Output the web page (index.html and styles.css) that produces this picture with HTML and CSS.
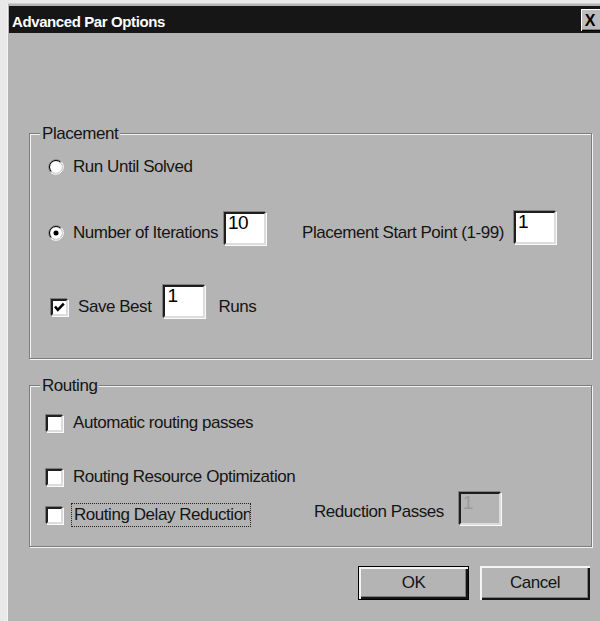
FILE: index.html
```html
<!DOCTYPE html>
<html lang="en">
<head>
<meta charset="utf-8">
<title>Advanced Par Options</title>
<link rel="stylesheet" href="styles.css">
</head>
<body>
<div class="window">
  <div class="titlebar">
    <span class="title">Advanced Par Options</span>
    <span class="close">X</span>
  </div>
  <div class="client">
    <fieldset class="group placement">
      <legend>Placement</legend>
      <div class="row row-solve">
        <span class="choice radio-choice">
          <svg class="radio" width="16" height="16" viewBox="0 0 16 16">
            <circle cx="8" cy="8" r="6" fill="#fff"/>
            <path d="M2.7 13.3A7.5 7.5 0 0 1 13.3 2.7" stroke="#808080" fill="none"/>
            <path d="M13.3 2.7A7.5 7.5 0 0 1 2.7 13.3" stroke="#fff" fill="none"/>
            <path d="M3.4 12.6A6.5 6.5 0 0 1 12.6 3.4" stroke="#000" fill="none"/>
            <path d="M12.6 3.4A6.5 6.5 0 0 1 3.4 12.6" stroke="#d6d6d6" fill="none"/>
          </svg>
          <span class="label">Run Until Solved</span>
        </span>
      </div>
      <div class="row row-iter">
        <span class="choice radio-choice">
          <svg class="radio" width="16" height="16" viewBox="0 0 16 16">
            <circle cx="8" cy="8" r="6" fill="#fff"/>
            <path d="M2.7 13.3A7.5 7.5 0 0 1 13.3 2.7" stroke="#808080" fill="none"/>
            <path d="M13.3 2.7A7.5 7.5 0 0 1 2.7 13.3" stroke="#fff" fill="none"/>
            <path d="M3.4 12.6A6.5 6.5 0 0 1 12.6 3.4" stroke="#000" fill="none"/>
            <path d="M12.6 3.4A6.5 6.5 0 0 1 3.4 12.6" stroke="#d6d6d6" fill="none"/>
            <circle cx="8" cy="8" r="2.5" fill="#000"/>
          </svg>
          <span class="label">Number of Iterations</span>
        </span>
        <span class="field field-iter">10</span>
        <span class="label label-start">Placement Start Point (1-99)</span>
        <span class="field field-start">1</span>
      </div>
      <div class="row row-save">
        <span class="choice check-choice">
          <span class="check">
            <svg width="13" height="13" viewBox="0 0 13 13">
              <polyline points="2,5.5 4.8,8.8 10.8,2.6" fill="none" stroke="#000" stroke-width="2.6"/>
            </svg>
          </span>
          <span class="label">Save Best</span>
        </span>
        <span class="field field-save">1</span>
        <span class="label label-runs">Runs</span>
      </div>
    </fieldset>

    <fieldset class="group routing">
      <legend>Routing</legend>
      <div class="row row-auto">
        <span class="choice route-choice">
          <span class="check"></span>
          <span class="label">Automatic routing passes</span>
        </span>
      </div>
      <div class="row row-resource">
        <span class="choice route-choice">
          <span class="check"></span>
          <span class="label">Routing Resource Optimization</span>
        </span>
      </div>
      <div class="row row-delay">
        <span class="choice route-choice delay-choice">
          <span class="check"></span>
          <span class="label focus">Routing Delay Reduction</span>
        </span>
        <span class="label label-passes">Reduction Passes</span>
        <span class="field field-passes disabled">1</span>
      </div>
    </fieldset>

    <div class="buttons">
      <span class="button default">OK</span>
      <span class="button">Cancel</span>
    </div>
  </div>
</div>
</body>
</html>
```
FILE: styles.css
```css
html, body {
  margin: 0;
  height: 100%;
}

body {
  background: #e9e9e9;
  overflow: hidden;
  padding-top: 3px;
  box-sizing: border-box;
  font: 17px "Liberation Sans", Arial, sans-serif;
  letter-spacing: -0.45px;
  color: #151515;
}

/* dialog frame */
.window {
  margin-left: 7px;
  width: 620px;
  height: 640px;
  background: #b4b4b4;
  border-top: 1px solid #cfcfcf;
  border-left: 1px solid #f4f4f4;
  padding: 2px 0 0 1px;
}

.titlebar {
  width: 600px;
  height: 27px;
  box-sizing: border-box;
  padding-left: 3px;
  background: #161616;
  display: flex;
  align-items: center;
}

.title {
  color: #fff;
  font-weight: bold;
  font-size: 15px;
  letter-spacing: -0.4px;
  line-height: 16px;
  margin-top: 4px;
}

.close {
  margin-left: auto;
  margin-right: 6px;
  width: 22px;
  height: 22px;
  box-sizing: border-box;
  padding-top: 2px;
  padding-right: 4px;
  background: #bcbcbc;
  box-shadow: inset 1px 1px 0 #fff, inset -1px -1px 0 #000, inset -2px -2px 0 #808080;
  display: flex;
  align-items: center;
  justify-content: center;
  font-weight: bold;
  font-size: 16px;
  letter-spacing: 0;
  color: #000;
}

.client {
  padding: 91px 0 0 20px;
}

/* etched group boxes */
.group {
  margin: 0;
  width: 563px;
  box-sizing: border-box;
  border: 1px solid #7c7c7c;
  box-shadow: inset 1px 1px 0 #f4f4f4, 1px 1px 0 #f4f4f4;
  min-inline-size: 0;
}

.group legend {
  margin-left: 10px;
  padding: 0 2px;
  line-height: 19px;
  background: #b4b4b4;
}

.placement {
  padding: 14px 0 40px;
}

.routing {
  margin-top: 17px;
  padding: 18px 0 19px;
}

.row {
  display: flex;
}

.choice {
  display: flex;
  align-items: center;
}

.label {
  line-height: 20px;
  white-space: nowrap;
}

/* radio buttons */
.radio {
  display: block;
  flex: none;
}

.radio-choice {
  margin-left: 18px;
}

.radio-choice .label {
  margin-left: 9px;
}

/* check boxes */
.check {
  width: 17px;
  height: 17px;
  box-sizing: border-box;
  flex: none;
  background: #fff;
  border: 2px solid;
  border-color: #202020 #dcdcdc #dcdcdc #202020;
  box-shadow: -1px -1px 0 #7b7b7b, 1px 1px 0 #fafafa;
}

.check svg {
  display: block;
}

.check-choice {
  margin-left: 21px;
}

.check-choice .label {
  margin-left: 10px;
}

.route-choice {
  margin-left: 16px;
}

.route-choice .label {
  margin-left: 10px;
}

/* edit fields */
.field {
  width: 42px;
  height: 33px;
  box-sizing: border-box;
  flex: none;
  background: #fff;
  border: 2px solid;
  border-color: #1e1e1e #dcdcdc #dcdcdc #1e1e1e;
  box-shadow: -1px -1px 0 #808080, 1px 1px 0 #fafafa;
  padding-left: 2px;
  font-size: 19px;
  letter-spacing: -0.5px;
  line-height: 18px;
  color: #000;
}

.field.disabled {
  background: #b4b4b4;
  color: #9a9a9a;
}

/* placement rows */
.row-solve {
  height: 20px;
}

.row-iter {
  margin-top: 34px;
  align-items: flex-end;
}

.row-iter .choice,
.row-iter .label-start {
  margin-bottom: 2px;
}

.field-iter {
  margin-left: 6px;
}

.label-start {
  margin-left: 36px;
}

.field-start {
  margin-left: 10px;
  margin-bottom: 1px;
}

.row-save {
  margin-top: 40px;
  align-items: flex-end;
}

.row-save .choice,
.row-save .label-runs {
  margin-bottom: 1px;
}

.field-save {
  margin-left: 12px;
}

.label-runs {
  margin-left: 13px;
}

/* routing rows */
.row-auto {
  height: 20px;
}

.row-resource {
  margin-top: 34px;
  height: 20px;
}

.row-delay {
  margin-top: 5px;
  align-items: flex-start;
}

.delay-choice {
  margin-top: 11px;
}

.delay-choice .label.focus {
  margin-left: 8px;
  border: 1px dotted #222;
  padding-left: 2px;
  line-height: 22px;
  width: 176px;
  overflow: hidden;
}

.label-passes {
  margin-left: 63px;
  margin-top: 10px;
}

.field-passes {
  margin-left: 15px;
}

/* push buttons */
.buttons {
  margin-top: 19px;
  width: 563px;
  box-sizing: border-box;
  padding-right: 2px;
  display: flex;
  justify-content: flex-end;
  gap: 11px;
}

.button {
  width: 110px;
  height: 34px;
  box-sizing: border-box;
  display: flex;
  align-items: center;
  justify-content: center;
  background: #b4b4b4;
  box-shadow: inset 2px 2px 0 #f4f4f4, inset -2px -2px 0 #141414, inset -3px -3px 0 #7c7c7c;
}

.button.default {
  width: 111px;
  border: 1px solid #000;
}
```
